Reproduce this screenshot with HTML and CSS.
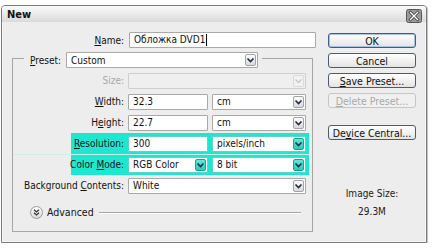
FILE: index.html
```html
<!DOCTYPE html>
<html>
<head>
<meta charset="utf-8">
<link rel="stylesheet" href="styles.css">
</head>
<body>
<div class="window">
  <div class="titlebar">
    <span class="title">New</span>
    <span class="close">
      <svg width="16" height="14" viewBox="0 0 16 14">
        <rect x="0.5" y="0.5" width="15" height="13" rx="2" fill="#9b9b9b" stroke="#555"/>
        <path d="M4.5 3.5 L11.5 10.5 M11.5 3.5 L4.5 10.5" stroke="#3a3a3a" stroke-width="3" stroke-linecap="square"/>
        <path d="M4.5 3.5 L11.5 10.5 M11.5 3.5 L4.5 10.5" stroke="#fff" stroke-width="1.4" stroke-linecap="square"/>
      </svg>
    </span>
  </div>
  <div class="content">
    <div class="main">
      <div class="name-row">
        <span class="lbl"><u>N</u>ame:</span>
        <div class="input">Обложка DVD1<span class="caret"></span></div>
      </div>
      <fieldset class="group">
        <legend class="preset">
          <span class="plbl"><u>P</u>reset:</span>
          <div class="select preset-select"><span class="val">Custom</span><i class="arrow"><svg width="9" height="8" viewBox="0 0 9 8"><path d="M1.5 2.5 L4.5 5.5 L7.5 2.5" fill="none" stroke="#1c2a48" stroke-width="1.6"/></svg></i></div>
        </legend>
        <div class="rows">
          <div class="row">
            <span class="lbl disabled">Size:</span>
            <div class="select wide disabled"><span class="val"></span><i class="arrow"><svg width="9" height="8" viewBox="0 0 9 8"><path d="M1.5 2.5 L4.5 5.5 L7.5 2.5" fill="none" stroke="#c8c8c8" stroke-width="1.4"/></svg></i></div>
          </div>
          <div class="row">
            <span class="lbl"><u>W</u>idth:</span>
            <div class="input">32.3</div>
            <div class="select"><span class="val">cm</span><i class="arrow"><svg width="9" height="8" viewBox="0 0 9 8"><path d="M1.5 2.5 L4.5 5.5 L7.5 2.5" fill="none" stroke="#1c2a48" stroke-width="1.6"/></svg></i></div>
          </div>
          <div class="row">
            <span class="lbl">H<u>e</u>ight:</span>
            <div class="input">22.7</div>
            <div class="select"><span class="val">cm</span><i class="arrow"><svg width="9" height="8" viewBox="0 0 9 8"><path d="M1.5 2.5 L4.5 5.5 L7.5 2.5" fill="none" stroke="#1c2a48" stroke-width="1.6"/></svg></i></div>
          </div>
          <div class="row hl">
            <span class="lbl"><u>R</u>esolution:</span>
            <div class="input">300</div>
            <div class="select"><span class="val">pixels/inch</span><i class="arrow"><svg width="9" height="8" viewBox="0 0 9 8"><path d="M1.5 2.5 L4.5 5.5 L7.5 2.5" fill="none" stroke="#1c2a48" stroke-width="1.6"/></svg></i></div>
          </div>
          <div class="row hl">
            <span class="lbl">Color <u>M</u>ode:</span>
            <div class="select"><span class="val">RGB Color</span><i class="arrow"><svg width="9" height="8" viewBox="0 0 9 8"><path d="M1.5 2.5 L4.5 5.5 L7.5 2.5" fill="none" stroke="#1c2a48" stroke-width="1.6"/></svg></i></div>
            <div class="select"><span class="val">8 bit</span><i class="arrow"><svg width="9" height="8" viewBox="0 0 9 8"><path d="M1.5 2.5 L4.5 5.5 L7.5 2.5" fill="none" stroke="#1c2a48" stroke-width="1.6"/></svg></i></div>
          </div>
          <div class="row">
            <span class="lbl">Background <u>C</u>ontents:</span>
            <div class="select wide"><span class="val">White</span><i class="arrow"><svg width="9" height="8" viewBox="0 0 9 8"><path d="M1.5 2.5 L4.5 5.5 L7.5 2.5" fill="none" stroke="#1c2a48" stroke-width="1.6"/></svg></i></div>
          </div>
        </div>
        <div class="adv">
          <svg class="adv-icon" width="13" height="13" viewBox="0 0 13 13">
            <defs><linearGradient id="ag" x1="0" y1="0" x2="0" y2="1"><stop offset="0" stop-color="#ffffff"/><stop offset="1" stop-color="#d6d6d6"/></linearGradient></defs>
            <circle cx="6.5" cy="6.5" r="6" fill="url(#ag)" stroke="#9a9a9a"/>
            <path d="M4 3.8 L6.5 6 L9 3.8 M4 6.8 L6.5 9 L9 6.8" fill="none" stroke="#333" stroke-width="1.2"/>
          </svg>
          <span class="adv-text">Advanced</span>
          <span class="adv-line"></span>
        </div>
      </fieldset>
    </div>
    <div class="side">
      <div class="btn default">OK</div>
      <div class="btn">Cancel</div>
      <div class="btn"><u>S</u>ave Preset...</div>
      <div class="btn disabled"><u>D</u>elete Preset...</div>
      <div class="btn device">De<u>v</u>ice Central...</div>
      <div class="info">Image Size:</div>
      <div class="info size">29.3M</div>
    </div>
  </div>
</div>
</body>
</html>
```

FILE: styles.css
```css
html, body {
  margin: 0;
  background: #ffffff;
}
body {
  font-family: "DejaVu Sans Condensed", "DejaVu Sans", sans-serif;
  font-stretch: condensed;
  font-size: 10px;
  color: #111;
}
u {
  text-decoration: underline;
  text-underline-offset: 1px;
}
.window {
  box-sizing: border-box;
  margin: 5px 0 0 1px;
  width: 426px;
  height: 238px;
  border: 1px solid #7a7a7a;
  border-radius: 4px 4px 0 0;
  background: #ededed;
  display: flex;
  flex-direction: column;
  box-shadow: inset 0 0 0 1px #f7f7f7, 1px 1px 1px rgba(0,0,0,0.25);
}
.titlebar {
  height: 16px;
  flex: none;
  display: flex;
  align-items: center;
  justify-content: space-between;
  padding: 0 4px 0 5px;
  background: linear-gradient(#fafafa, #dadada);
  border-radius: 3px 3px 0 0;
}
.title {
  font-weight: bold;
  font-size: 11px;
  color: #111;
}
.close {
  display: flex;
  margin-top: 3px;
}
.content {
  flex: 1;
  display: flex;
  padding-top: 10px;
}
.main {
  padding-left: 10px;
  width: 304px;
  flex: none;
}
.name-row {
  display: grid;
  grid-template-columns: 112px 187px;
  column-gap: 5px;
  align-items: center;
  height: 16px;
}
.lbl {
  text-align: right;
  white-space: nowrap;
}
.lbl.disabled {
  color: #a8a8a8;
}
.input {
  box-sizing: border-box;
  height: 16px;
  border: 1px solid #a9a9a9;
  border-radius: 1px;
  background: #fff;
  padding-left: 4px;
  line-height: 14px;
  white-space: nowrap;
  display: flex;
  align-items: center;
}
.caret {
  display: inline-block;
  width: 1px;
  height: 12px;
  background: #000;
  margin-left: 1px;
}
.group {
  box-sizing: border-box;
  width: 301px;
  min-width: 0;
  margin: 0;
  padding: 0 0 11px 0;
  border: 1px solid #a6a6a6;
}
.preset {
  margin-left: 11px;
  padding: 4px 4px 0 6px;
  display: flex;
  align-items: center;
  gap: 3px;
}
.plbl {
  width: 33px;
}
.select {
  box-sizing: border-box;
  height: 16px;
  border: 1px solid #a9a9a9;
  border-radius: 1px;
  background: #fff;
  display: flex;
  align-items: center;
  justify-content: space-between;
  padding: 0 1px 0 4px;
  white-space: nowrap;
}
.preset-select {
  width: 192px;
}
.select.wide {
  grid-column: 2 / 4;
}
.select.disabled {
  background: #efefef;
  border-color: #cfcfcf;
}
.arrow {
  box-sizing: border-box;
  width: 11px;
  height: 12px;
  border: 1px solid #a3a3a3;
  border-radius: 2px;
  background: linear-gradient(#fdfdfd, #d9d9d9);
  display: flex;
  align-items: center;
  justify-content: center;
}
.select.disabled .arrow {
  border-color: #dadada;
  background: #f2f2f2;
}
.rows {
  padding-top: 2px;
}
.row {
  display: grid;
  grid-template-columns: 111px 80px 94px;
  column-gap: 4px;
  align-items: center;
  height: 21px;
  width: 296px;
  box-sizing: border-box;
  padding-right: 3px;
}
.row.hl {
  background: linear-gradient(to right, transparent 58px, #1ee7d1 58px);
}
.row.hl + .row.hl {
  box-shadow: inset 0 1px 0 #cfeee9;
}
.row.hl .arrow {
  background: linear-gradient(#5fe6d8, #2ccbb9);
  border-color: #17a595;
}
.row.hl .input,
.row.hl .select {
  border-color: #5fd3c5;
}
.adv {
  margin-top: 8px;
  height: 16px;
  display: flex;
  align-items: center;
  padding-left: 17px;
  padding-right: 11px;
}
.adv-icon {
  flex: none;
}
.adv-text {
  margin-left: 4px;
  font-size: 10.5px;
}
.adv-line {
  flex: 1;
  height: 1px;
  background: #a6a6a6;
  box-shadow: 0 1px 0 #fff;
  margin-left: 5px;
}
.side {
  width: 88px;
  margin-left: 12px;
  display: flex;
  flex-direction: column;
  gap: 5px;
  padding-top: 1px;
}
.btn {
  box-sizing: border-box;
  height: 15px;
  border: 1px solid #4d5a70;
  border-radius: 3px;
  background: linear-gradient(#ffffff, #e4e4e4);
  display: flex;
  align-items: center;
  justify-content: center;
  white-space: nowrap;
  font-size: 10.5px;
  color: #111;
}
.btn.default {
  border-color: #3a5d8f;
  box-shadow: inset 0 0 0 1px #a9c3e6;
}
.btn.disabled {
  border-color: #c6c6c6;
  color: #a9a9a9;
  background: #f0f0f0;
}
.btn.device {
  margin-top: 12px;
}
.info {
  text-align: center;
  line-height: 12px;
  color: #222;
}
.info:nth-last-child(2) {
  margin-top: 43px;
}
.info.size {
  margin-top: 1px;
}
```
